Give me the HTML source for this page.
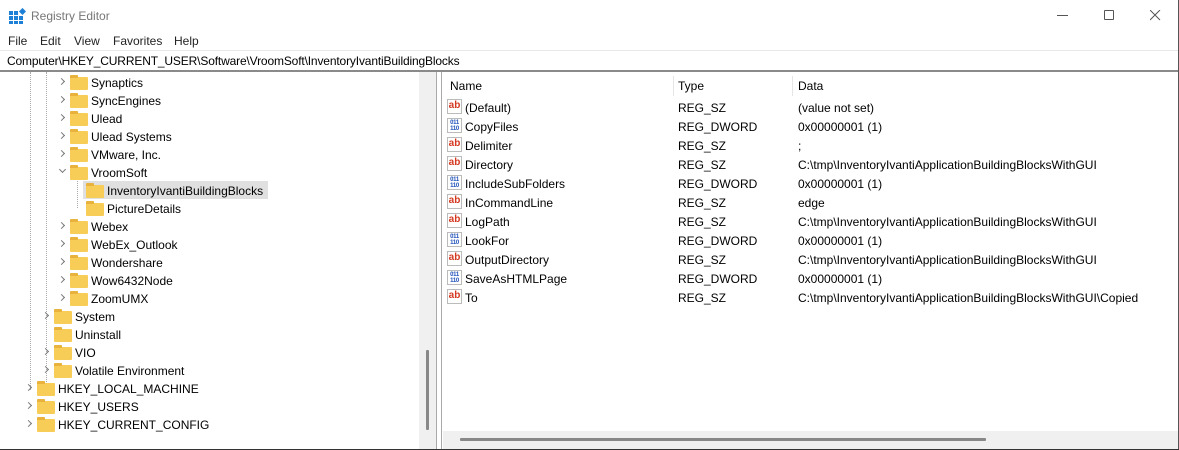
<!DOCTYPE html><html><head><style>
*{margin:0;padding:0;box-sizing:border-box}
body{width:1179px;height:450px;background:#fff;font-family:"Liberation Sans",sans-serif;font-size:12px;color:#000;position:relative;overflow:hidden}
.a{position:absolute;white-space:nowrap}
.f{position:absolute;width:18px;height:13px;background:#f8cd57;border-radius:1px}
.f:before{content:"";position:absolute;left:0;top:-2px;width:8px;height:3px;background:#e8b23c;border-radius:1px 1px 0 0}
.c{position:absolute;width:5px;height:5px;border-right:1px solid #777;border-bottom:1px solid #777;transform:rotate(-45deg)}
.cd{transform:rotate(45deg)}
.ab{position:absolute;width:15px;height:15px;border:1px solid #bbb;background:#fff;color:#d4381f;font-weight:bold;font-size:10px;line-height:12px;text-align:center}
.bi{position:absolute;width:15px;height:15px;border:1px solid #bbb;background:#fff;color:#1c4fb8;font-weight:bold;font-size:6px;line-height:6px;text-align:center;padding-top:1px;letter-spacing:-0.3px}
</style></head><body>
<div class="a" style="left:0;top:0;width:1179px;height:449px;border-right:1px solid #555;"></div>
<div class="a" style="left:0;top:449px;width:1179px;height:1px;background:#333"></div>
<svg class="a" style="left:9px;top:8px" width="17" height="16"><g fill="#1e7fd6"><rect x="0" y="3" width="4" height="4"/><rect x="5" y="3" width="4" height="4"/><rect x="0" y="8" width="4" height="4"/><rect x="5" y="8" width="4" height="4"/><rect x="10" y="8" width="4" height="4"/><rect x="0" y="13" width="4" height="3"/><rect x="5" y="13" width="4" height="3"/><rect x="10" y="13" width="4" height="3"/><rect x="11" y="1" width="5" height="5" transform="rotate(45 13.5 3.5)"/></g></svg>
<div class="a" style="left:31px;top:9px;color:#777;font-size:12px">Registry Editor</div>
<div class="a" style="left:1057px;top:15px;width:11px;height:1px;background:#555"></div>
<div class="a" style="left:1104px;top:10px;width:10px;height:10px;border:1px solid #555;border-radius:1px"></div>
<svg class="a" style="left:1150px;top:10px" width="11" height="11"><path d="M0 0L10 10M10 0L0 10" stroke="#555" stroke-width="1"/></svg>
<div class="a" style="left:8px;top:34px;color:#222">File</div>
<div class="a" style="left:40px;top:34px;color:#222">Edit</div>
<div class="a" style="left:74px;top:34px;color:#222">View</div>
<div class="a" style="left:113px;top:34px;color:#222">Favorites</div>
<div class="a" style="left:174px;top:34px;color:#222">Help</div>
<div class="a" style="left:0;top:50px;width:1178px;height:22px;border-top:1px solid #e8e8e8;border-bottom:2px solid #8a8a8a;background:#fff"></div>
<div class="a" style="left:7px;top:54px;letter-spacing:-0.15px">Computer\HKEY_CURRENT_USER\Software\VroomSoft\InventoryIvantiBuildingBlocks</div>
<div class="a" style="left:419px;top:72px;width:17px;height:377px;background:#f0f0f0"></div>
<div class="a" style="left:426px;top:350px;width:3px;height:80px;background:#888;border-radius:1px"></div>
<div class="a" style="left:436px;top:72px;width:1px;height:377px;background:#aaa"></div>
<div class="a" style="left:441px;top:72px;width:1px;height:377px;background:#aaa"></div>
<div class="a" style="left:443px;top:431px;width:735px;height:18px;background:#f0f0f0"></div>
<div class="a" style="left:460px;top:438px;width:526px;height:3px;background:#888;border-radius:1px"></div>
<div class="a" style="left:673px;top:76px;width:1px;height:20px;background:#e5e5e5"></div>
<div class="a" style="left:792px;top:76px;width:1px;height:20px;background:#e5e5e5"></div>
<div class="a" style="left:450px;top:79px">Name</div>
<div class="a" style="left:678px;top:79px">Type</div>
<div class="a" style="left:798px;top:79px">Data</div>
<div class="a" style="left:30px;top:72px;height:318px;border-left:1px dotted #aaa"></div>
<div class="a" style="left:46px;top:72px;height:318px;border-left:1px dotted #aaa"></div>
<div class="a" style="left:77px;top:172px;height:36px;border-left:1px dotted #aaa"></div>
<div class="a" style="left:83px;top:181px;width:185px;height:18px;background:#e0e0e0"></div>
<div id="tree"></div>
<script>
var t=[[2,"Synaptics",1],[2,"SyncEngines",1],[2,"Ulead",1],[2,"Ulead Systems",1],[2,"VMware, Inc.",1],[2,"VroomSoft",2],[3,"InventoryIvantiBuildingBlocks",0],[3,"PictureDetails",0],[2,"Webex",1],[2,"WebEx_Outlook",1],[2,"Wondershare",1],[2,"Wow6432Node",1],[2,"ZoomUMX",1],[1,"System",1],[1,"Uninstall",0],[1,"VIO",1],[1,"Volatile Environment",1],[0,"HKEY_LOCAL_MACHINE",1],[0,"HKEY_USERS",1],[0,"HKEY_CURRENT_CONFIG",1]];
var fx=[37,54,70,86],h="";
t.forEach(function(r,i){var y=74+i*18,x=fx[r[0]];
if(r[2]==1)h+='<div class="c" style="left:'+(x-11)+'px;top:'+(y+5)+'px"></div>';
if(r[2]==2)h+='<div class="c cd" style="left:'+(x-10)+'px;top:'+(y+3)+'px"></div>';
h+='<div class="f" style="left:'+x+'px;top:'+(y+3)+'px"></div><div class="a" style="left:'+(x+21)+'px;top:'+(y+2)+'px">'+r[1]+'</div>';});
var d=[["(Default)","REG_SZ","(value not set)"],["CopyFiles","REG_DWORD","0x00000001 (1)"],["Delimiter","REG_SZ",";"],["Directory","REG_SZ","C:\\tmp\\InventoryIvantiApplicationBuildingBlocksWithGUI"],["IncludeSubFolders","REG_DWORD","0x00000001 (1)"],["InCommandLine","REG_SZ","edge"],["LogPath","REG_SZ","C:\\tmp\\InventoryIvantiApplicationBuildingBlocksWithGUI"],["LookFor","REG_DWORD","0x00000001 (1)"],["OutputDirectory","REG_SZ","C:\\tmp\\InventoryIvantiApplicationBuildingBlocksWithGUI"],["SaveAsHTMLPage","REG_DWORD","0x00000001 (1)"],["To","REG_SZ","C:\\tmp\\InventoryIvantiApplicationBuildingBlocksWithGUI\\Copied"]];
d.forEach(function(r,i){var y=99+i*19;
h+=(r[1]=="REG_SZ"?'<div class="ab" style="left:447px;top:'+(y)+'px">ab</div>':'<div class="bi" style="left:447px;top:'+(y)+'px">011<br>110</div>');
h+='<div class="a" style="left:465px;top:'+(y+2)+'px">'+r[0]+'</div><div class="a" style="left:678px;top:'+(y+2)+'px">'+r[1]+'</div><div class="a" style="left:798px;top:'+(y+2)+'px">'+r[2]+'</div>';});
document.getElementById("tree").innerHTML=h;
</script>
</body></html>
